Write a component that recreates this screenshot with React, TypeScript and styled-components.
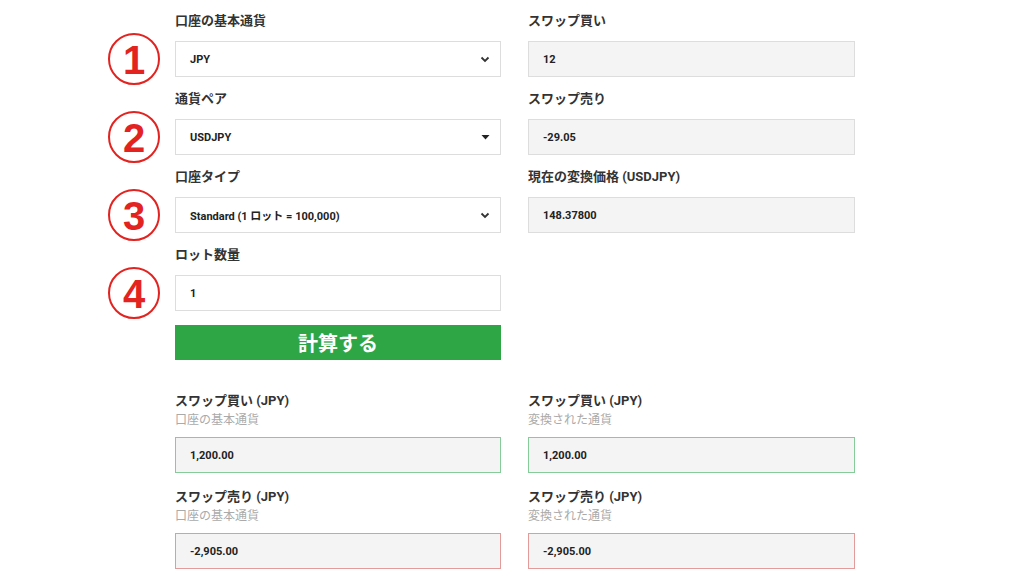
import React from 'react';
import styled, { createGlobalStyle, css } from 'styled-components';

type Tone = 'select' | 'readonly' | 'buy' | 'sell';

const GlobalStyle = createGlobalStyle`
    body {
        margin: 0;
        background: #ffffff;
        font-family: Roboto, "Noto Sans CJK JP", sans-serif;
        color: #333333;
    }
`

const Page = styled.div`
    width: 1024px;
    min-height: 576px;
    padding: 11px 0 0 107px;
    box-sizing: border-box;
    display: flex;
    flex-direction: column;
    align-items: flex-start;
`

const Row = styled.div`
    display: flex;
    align-items: flex-end;
    margin-bottom: 12px;
`

const MarkerSlot = styled.div`
    width: 54px;
    margin-right: 14px;
    display: flex;
    justify-content: center;
    align-self: flex-end;
    margin-bottom: -8px;
`

const Marker = styled.div`
    width: 52px;
    height: 52px;
    box-sizing: border-box;
    border: 2px solid #e3231f;
    border-radius: 50%;
    display: flex;
    align-items: center;
    justify-content: center;
    color: #e3231f;
    font-family: "Liberation Sans", Arial, sans-serif;
    font-weight: 700;
    font-size: 40px;
    line-height: 1;
    padding-top: 2px;
`

const Field = styled.div<{ $right?: boolean }>`
    width: 326px;
    display: flex;
    flex-direction: column;

    ${({ $right }) => $right && css`
        width: 327px;
        margin-left: 27px;
    `}
`

const Label = styled.div`
    font-size: 13px;
    line-height: 20px;
    font-weight: 700;
    color: #333333;
    margin-bottom: 10px;
    white-space: nowrap;
`

const Box = styled.div<{ $tone: Tone }>`
    height: 36px;
    flex-shrink: 0;
    box-sizing: border-box;
    padding: 0 10px 0 14px;
    display: flex;
    align-items: center;
    justify-content: space-between;
    font-size: 11px;
    font-weight: 700;
    color: #222222;
    border: 1px solid #dddddd;
    background: #f4f4f4;

    ${({ $tone }) => $tone === 'select' && css`
        background: #ffffff;
    `}
    ${({ $tone }) => $tone === 'buy' && css`
        border-color: #86cc98;
    `}
    ${({ $tone }) => $tone === 'sell' && css`
        border-color: #e39a9a;
    `}
`

const CalcButton = styled.button`
    width: 326px;
    height: 35px;
    flex-shrink: 0;
    margin: 2px 0 0 68px;
    padding: 0;
    border: none;
    background: #2ea646;
    color: #ffffff;
    font-family: "Noto Sans CJK JP", sans-serif;
    font-size: 20px;
    font-weight: 700;
    cursor: pointer;
`

const Results = styled.div`
    margin: 32px 0 0 68px;
    display: flex;
    flex-direction: column;
`

const ResultRow = styled.div`
    display: flex;
    margin-bottom: 15px;
`

const ResultTitle = styled.div`
    font-size: 13px;
    line-height: 18px;
    font-weight: 700;
    color: #333333;
`

const ResultSub = styled.div`
    font-size: 12px;
    line-height: 18px;
    color: #aaaaaa;
    margin: 1px 0 8px;
`

const Chevron = () => (
    <svg width="10" height="7" viewBox="0 0 10 7">
        <path d="M1.5 1.5 L5 5 L8.5 1.5" fill="none" stroke="#333" strokeWidth="1.8" />
    </svg>
)

const Caret = () => (
    <svg width="9" height="6" viewBox="0 0 9 6">
        <path d="M0.5 1 L8.5 1 L4.5 5.5 Z" fill="#222" />
    </svg>
)

const rows = [
    { n: '1', label: '口座の基本通貨', value: 'JPY', icon: <Chevron />, right: { label: 'スワップ買い', value: '12' } },
    { n: '2', label: '通貨ペア', value: 'USDJPY', icon: <Caret />, right: { label: 'スワップ売り', value: '-29.05' } },
    { n: '3', label: '口座タイプ', value: 'Standard (1 ロット = 100,000)', icon: <Chevron />, right: { label: '現在の変換価格 (USDJPY)', value: '148.37800' } },
    { n: '4', label: 'ロット数量', value: '1', icon: null, right: null },
]

const results = [
    { title: 'スワップ買い (JPY)', value: '1,200.00', tone: 'buy' as Tone },
    { title: 'スワップ売り (JPY)', value: '-2,905.00', tone: 'sell' as Tone },
]

const App = () => {
    return (
        <>
            <GlobalStyle />
            <Page>
                {rows.map((row) => (
                    <Row key={row.n}>
                        <MarkerSlot>
                            <Marker>{row.n}</Marker>
                        </MarkerSlot>
                        <Field>
                            <Label>{row.label}</Label>
                            <Box $tone="select">
                                <span>{row.value}</span>
                                {row.icon}
                            </Box>
                        </Field>
                        {row.right && (
                            <Field $right>
                                <Label>{row.right.label}</Label>
                                <Box $tone="readonly">{row.right.value}</Box>
                            </Field>
                        )}
                    </Row>
                ))}
                <CalcButton>計算する</CalcButton>
                <Results>
                    {results.map((r) => (
                        <ResultRow key={r.title}>
                            <Field>
                                <ResultTitle>{r.title}</ResultTitle>
                                <ResultSub>口座の基本通貨</ResultSub>
                                <Box $tone={r.tone}>{r.value}</Box>
                            </Field>
                            <Field $right>
                                <ResultTitle>{r.title}</ResultTitle>
                                <ResultSub>変換された通貨</ResultSub>
                                <Box $tone={r.tone}>{r.value}</Box>
                            </Field>
                        </ResultRow>
                    ))}
                </Results>
            </Page>
        </>
    );
};

export default App;
